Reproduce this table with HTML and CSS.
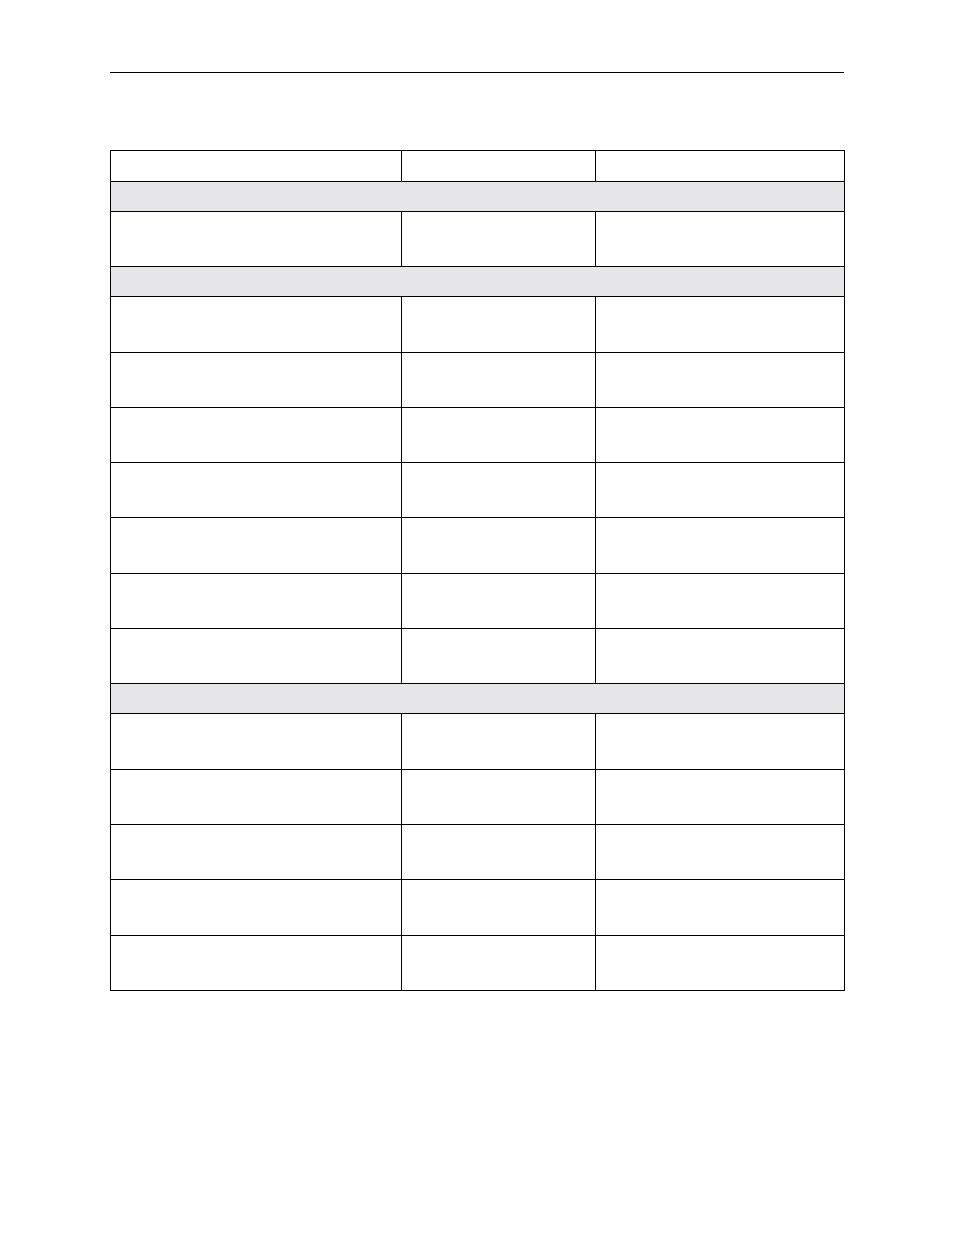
FILE: index.html
```html
<!DOCTYPE html>
<html>
<head>
<meta charset="utf-8">
<link rel="stylesheet" href="styles.css">
</head>
<body>
<div class="page">
  <div class="rule"></div>
  <table class="grid">
    <colgroup><col class="c1"><col class="c2"><col class="c3"></colgroup>
    <tr class="head"><td></td><td></td><td></td></tr>
    <tr class="sec"><td colspan="3"></td></tr>
    <tr class="row"><td></td><td></td><td></td></tr>
    <tr class="sec"><td colspan="3"></td></tr>
    <tr class="row"><td></td><td></td><td></td></tr>
    <tr class="row"><td></td><td></td><td></td></tr>
    <tr class="row"><td></td><td></td><td></td></tr>
    <tr class="row"><td></td><td></td><td></td></tr>
    <tr class="row"><td></td><td></td><td></td></tr>
    <tr class="row"><td></td><td></td><td></td></tr>
    <tr class="row"><td></td><td></td><td></td></tr>
    <tr class="sec"><td colspan="3"></td></tr>
    <tr class="row"><td></td><td></td><td></td></tr>
    <tr class="row"><td></td><td></td><td></td></tr>
    <tr class="row"><td></td><td></td><td></td></tr>
    <tr class="row"><td></td><td></td><td></td></tr>
    <tr class="row"><td></td><td></td><td></td></tr>
  </table>
</div>
</body>
</html>
```
FILE: styles.css
```css
html, body {
  margin: 0;
  padding: 0;
  background: #ffffff;
  font-family: "Liberation Sans", Arial, sans-serif;
}
.page {
  width: 954px;
  height: 1235px;
  padding-top: 72px;
  box-sizing: border-box;
}
.rule {
  margin-left: 110px;
  width: 734px;
  height: 1px;
  background: #000000;
}
.grid {
  margin-top: 77px;
  margin-left: 110px;
  width: 734px;
  border-collapse: collapse;
  table-layout: fixed;
}
.c1 { width: 291px; }
.c2 { width: 194px; }
.c3 { width: 249px; }
.grid td {
  border: 1px solid #000000;
  padding: 0;
}
.head td { height: 30px; }
.sec td { height: 29px; background: #e6e6e8; }
.row td { height: 54.3px; }
```
